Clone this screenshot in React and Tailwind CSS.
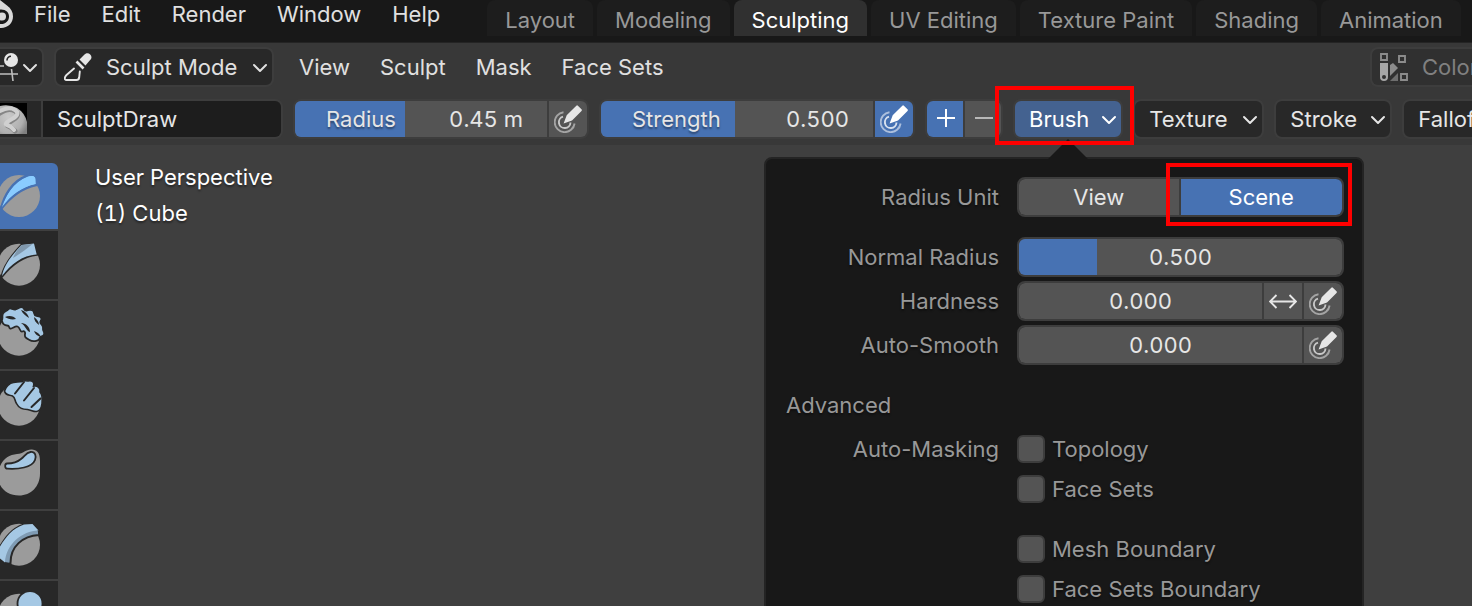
import React, { useState } from 'react';
import { ChevronDown } from 'lucide-react';
import clsx from 'clsx';

const MENUS = ['File', 'Edit', 'Render', 'Window', 'Help'];
const WORKSPACES = ['Layout', 'Modeling', 'Sculpting', 'UV Editing', 'Texture Paint', 'Shading', 'Animation'];
const MODE_MENUS = ['View', 'Sculpt', 'Mask', 'Face Sets'];

const BlenderLogo = () => (
  <svg className="w-4 h-7 shrink-0" viewBox="0 0 16 28" fill="none" aria-hidden="true">
    <path d="M0 0 L7 5.5 C11 8.5 13 12 13 16.5 C13 23 8 28 1 28 L0 28 L0 24 C5.500 24.500 9 21 9 16.500 C9 12 5.500 9 0 9.500 Z" fill="#d9d9d9" />
    <circle cx="2" cy="16.500" r="4" fill="#d9d9d9" />
  </svg>
);

const Chevron = () => <ChevronDown className="size-6 shrink-0 pointer-events-none translate-y-px" strokeWidth={2} />;

const EditorTypeIcon = () => (
  <svg className="w-[18px] h-7 shrink-0" viewBox="0 0 18 28" fill="none" aria-hidden="true">
    <path d="M0 13h4M0 21h18M11.500 16l1.500 12" stroke="#bdbdbd" strokeWidth="1.600" />
    <circle cx="11" cy="7" r="7" fill="#e6e6e6" />
    <path d="M7 7.500A4 4 0 0 1 11 3.300" stroke="#282828" strokeWidth="1.600" />
  </svg>
);

const SculptIcon = () => (
  <svg className="size-7" viewBox="0 0 28 28" fill="none" aria-hidden="true">
    <path d="M10 15.500 2.500 22c-1.800 1.700-2.800 5 0 5h10c1.600 0 2.500-1 2.700-2.500l.6-6" stroke="#e6e6e6" strokeWidth="1.900" strokeLinejoin="round" strokeLinecap="round" />
    <path d="m12.500 8.500 7 7" stroke="#e6e6e6" strokeWidth="2.600" />
    <path d="m15.500 6.500 5-5c2-2 4.200-1.600 5.700-.1s1.900 3.700-.1 5.700l-4.600 5.400Z" fill="#e6e6e6" />
  </svg>
);

const PressureIcon = () => (
  <svg className="size-7" viewBox="0 0 28 28" fill="none" aria-hidden="true">
    <path d="M9.500 7.200A10 10 0 1 0 20.600 18.500" stroke="currentColor" strokeOpacity="0.55" strokeWidth="1.900" />
    <path d="M9 11.700A5.800 5.800 0 1 0 16.500 17.500" stroke="currentColor" strokeOpacity="0.8" strokeWidth="1.900" />
    <path d="M9.600 18.400 12.700 10.200 22.300.7q.8-.8 1.600 0l3.600 3.600q.8.800 0 1.600L18 15.500Z" fill="currentColor" />
  </svg>
);

const ArrowsIcon = () => (
  <svg className="size-7" viewBox="0 0 28 28" fill="none" stroke="#e6e6e6" strokeWidth="1.900" aria-hidden="true">
    <path d="M1 14.500h26M7.500 8 1 14.500 7.500 21M20.500 8l6.500 6.500-6.500 6.500" />
  </svg>
);

const ColorAttributeIcon = () => (
  <svg className="size-7" viewBox="0 0 28 28" fill="none" aria-hidden="true">
    <path d="M1 1h6v6H1zM19 3h6v6h-6zM21 21h6v6h-6z" stroke="#8c8c8c" strokeWidth="1.900" />
    <path fillRule="evenodd" d="M0 10h8v14a4 4 0 0 1-8 0ZM4 22a2 2 0 1 0 0 4 2 2 0 0 0 0-4Z" fill="#a6a6a6" />
    <path d="M10 12l3-2 5 5-8 8Z" fill="#8c8c8c" />
    <path d="M18 20v8h-8Z" fill="#6e6e6e" />
  </svg>
);

const BrushPreview = () => (
  <svg className="w-7 h-8" viewBox="0 0 28 32" aria-hidden="true">
    <defs>
      <radialGradient id="clay" cx="0.3" cy="0.4" r="0.8">
        <stop offset="0" stopColor="#c9c9c9" />
        <stop offset="0.700" stopColor="#b0b0b0" />
        <stop offset="1" stopColor="#808080" />
      </radialGradient>
    </defs>
    <path d="M0 0h27v31H0z" fill="#000" />
    <path d="M0 3Q9 1 17 5q8 5 10 14v12H0Z" fill="url(#clay)" />
    <path d="M0 10Q9 4 15 8t-2 9-5 6 7 5" fill="none" stroke="#858585" strokeWidth="5" strokeLinecap="round" />
    <path d="M0 8Q9 3 15 7t-3 9-5 6 7 5" fill="none" stroke="#d0d0d0" strokeWidth="4" strokeLinecap="round" />
  </svg>
);

const Ball = () => <circle cx="19" cy="33.700" r="21" fill="#9b9b9b" />;

// Sculpt brushes, each drawn on a 58x68 toolbar cell
const TOOLS = [
  {
    name: 'Draw',
    art: (
      <>
        <circle cx="19" cy="33" r="21" fill="#9b9b9b" />
        <path d="M1 46C4 33 12 18 27 13c5-2 9-2 9 3v6C22 25 11 33 1 46Z" fill="#8accff" stroke="#4772b3" strokeWidth="2.400" />
        <path d="M2 44C6 33 14 19 27 14c4-1.500 8-1.500 8.500 2l.3 5C22 24 12 31 2 44Z" fill="#8accff" />
      </>
    ),
  },
  {
    name: 'Draw Sharp',
    art: (
      <>
        <Ball />
        <path d="M1.500 46C4 34 12 24 21.500 14L34 12.500l3 11C22 25 11 34 1.500 46Z" fill="#a5c8e4" stroke="#282828" strokeWidth="2.400" />
        <path d="M2 45C4 34 12 24 21.500 14L34 12.500l2.700 11C22 24.500 11 33 2 45Z" fill="#a5c8e4" />
        <path d="m21.500 14 11-1C27 18 21 22 13 27 15 22 18 18 21.500 14Z" fill="#8098ad" />
      </>
    ),
  },
  {
    name: 'Clay',
    art: (
      <>
        <Ball />
        <path
          d="M1.500 20c2-2 0-5 1.500-7.500 2-3 4-2 5.500-4.500 2-2 4 1 7 .5 3-.8 4-3 7-2.200 2 .6 1 3.700 4 3.200s5-1.500 7 .7c1 2 0 4 3 4.800 3 .8 5 0 5 3 0 2-2 2-1 4 1.200 2 3 3 2.500 5.500s2 3 1 6c-.8 3-4 1-4.500 4-1 3-7 3.500-10 1.500-4-2-5-3-4.500-6 .5-2-1-3.500-2.500-2.500-3 1-2-4-5-5-3-.8-5 3-7.500 2-1.500-.8 0-3-3-3-2 0-4-1-5-4.500Z"
          fill="#a5c8e4" stroke="#282828" strokeWidth="1.800"
        />
        <path d="M5 16c4-2 9-1 11 2-4 1-8 0-11-2Zm16-7c4 1 7 4 8 8-3-2-6-4-8-8Zm0 13c5 0 9 4 9 9-4-1-4-6-9-9Zm13 8c3 1 6 3 7 6-4-1-6-3-7-6Zm0-14c3 2 5 5 5 8-3-2-5-5-5-8Z" fill="#282828" />
      </>
    ),
  },
  {
    name: 'Clay Strips',
    art: (
      <>
        <Ball />
        <path
          d="M4.500 20c1-4 5-8 9-8.500 4-.8 6-1 8-.8 2-1.500 4-1.200 6.500-.7 4-1.200 7 1.500 5.500 5.200 4-.7 7.500 1.800 6.500 5.800 3 3 2.500 7 2 11.500-.5 5-3 8-5.500 8-3 .5-5-1.500-9-2-5 0-9-2-11-6-2-3-1-6-4-7.500s-7 0-8-5Z"
          fill="#a5c8e4" stroke="#282828" strokeWidth="1.600"
        />
        <path d="M15 22.500 24 11M24 29.500 34 17M31.500 36l9-8.500" stroke="#282828" strokeWidth="2" strokeLinecap="round" />
      </>
    ),
  },
  {
    name: 'Clay Thumb',
    art: (
      <>
        <path d="M-2 33C0 19 8 14 17 13c7-.5 9-5 15-4.500 7 .5 8 6 8 12v12c0 13-9 22-21 22S-3 46-2 33Z" fill="#9b9b9b" />
        <path
          d="M7 22.500c5 0 10-1 14-4.500 4-3 5-6.500 9.500-7 5-.5 6 4 4.500 8-1.500 4-5 6-11 7.500s-12 1.500-16.500 1.200c-3 0-3-5-.5-5.200Z"
          fill="#a5c8e4" stroke="#282828" strokeWidth="1.800"
        />
      </>
    ),
  },
  {
    name: 'Layer',
    art: (
      <>
        <Ball />
        <path d="M-2 39C5 27 11 18 24 13.500l8.500-.5 6.500 7v4C23 25 10 35 10.500 53L5 52-2 46Z" fill="#7f9bb3" stroke="#282828" strokeWidth="2" />
        <path d="M-2 39C5 27 11 18 24 13.500l8.500-.5 6 6.500C22 20 6 33 5 51.500L-2 46Z" fill="#a5c8e4" />
      </>
    ),
  },
  {
    name: 'Inflate',
    art: (
      <>
        <Ball />
        <circle cx="30" cy="22.500" r="12.500" fill="#a5c8e4" stroke="#282828" strokeWidth="1.800" />
      </>
    ),
  },
];

const IconButton = ({ label, active, children }) => (
  <button
    aria-label={label}
    className={clsx(
      'w-10 shrink-0 border-l-2 border-[#3d3d3d] grid place-items-center',
      active ? 'bg-[#4772b3] text-white' : 'bg-[#545454] text-[#e6e6e6]'
    )}
  >
    {children}
  </button>
);

// Outer frame shared by every grouped control
const Group = ({ className, children }) => (
  <div className={clsx('h-10 flex rounded-lg border-2 border-[#3d3d3d] overflow-hidden', className)}>{children}</div>
);

const HeaderSlider = ({ id, label, value, fill, active, className }) => (
  <Group className={clsx('shrink-0', className)}>
    <div className="relative flex-1 min-w-0 flex items-center bg-[#545454] pl-[31px] pr-6">
      <div className="absolute inset-y-0 left-0 bg-[#4772b3]" style={{ width: `${fill}%` }} />
      <label htmlFor={id} className="relative">{label}</label>
      <input id={id} defaultValue={value} className="relative flex-1 min-w-0 text-right tabular-nums outline-none" />
    </div>
    <IconButton label={`${label} pressure`} active={active}>
      <PressureIcon />
    </IconButton>
  </Group>
);

const NumberField = ({ id, label, value, fill = 0, children }) => (
  <>
    <label htmlFor={id} className="text-right">{label}</label>
    <Group className="text-[#e6e6e6]">
      <div className="relative flex-1 min-w-0 flex bg-[#545454]">
        <div className="absolute inset-y-0 left-0 bg-[#4772b3]" style={{ width: `${fill}%` }} />
        <input id={id} defaultValue={value} className="relative w-full text-center tabular-nums outline-none" />
      </div>
      {children}
    </Group>
  </>
);

const Check = ({ label }) => (
  <label className="col-start-2 h-10 flex items-center gap-[7px]">
    <input type="checkbox" className="appearance-none size-7 rounded-md border-2 border-[#3d3d3d] bg-[#545454] checked:bg-[#4772b3]" />
    {label}
  </label>
);

const DropButton = ({ label, open, onClick, className }) => (
  <button
    onClick={onClick}
    className={clsx(
      'h-10 shrink-0 flex items-center justify-between gap-2 pl-3.5 rounded-lg border-2 border-[#3d3d3d] whitespace-nowrap',
      open ? 'bg-[#446290] text-white' : 'bg-[#282828]',
      className
    )}
  >
    {label}
    <Chevron />
  </button>
);

const BrushPopover = () => {
  const [unit, setUnit] = useState('Scene');

  return (
    <div className="absolute z-10 top-[58px] -left-[249px] w-[600px] rounded-lg border-2 border-[#242424] bg-[#181818] pt-[18px] pb-5 pl-5 pr-[18px] text-[#989898]">
      <svg className="absolute -top-5 left-[282px] w-10 h-5" viewBox="0 0 40 20" aria-hidden="true">
        <path d="M0 20 20 0l20 20Z" fill="#181818" />
      </svg>
      <div className="grid grid-cols-[213px_1fr] gap-x-[18px] gap-y-1 items-center">
        <span className="text-right mb-4">Radius Unit</span>
        <div className="relative mb-4">
          <div className="h-10 grid grid-cols-2 rounded-lg border-2 border-[#3d3d3d] overflow-hidden">
            {['View', 'Scene'].map((u) => (
              <button
                key={u}
                aria-pressed={unit === u}
                onClick={() => setUnit(u)}
                className={clsx(
                  'first:border-r-2 border-[#3d3d3d]',
                  unit === u ? 'bg-[#4772b3] text-white' : 'bg-[#545454] text-[#e6e6e6]'
                )}
              >
                {u}
              </button>
            ))}
          </div>
          <div className="absolute -top-3.5 -right-2 w-[186px] h-[63px] border-4 border-[#ff0000] pointer-events-none" />
        </div>

        <NumberField id="normal-radius" label="Normal Radius" value="0.500" fill={24} />
        <NumberField id="hardness" label="Hardness" value="0.000">
          <IconButton label="Invert hardness"><ArrowsIcon /></IconButton>
          <IconButton label="Hardness pressure"><PressureIcon /></IconButton>
        </NumberField>
        <NumberField id="auto-smooth" label="Auto-Smooth" value="0.000">
          <IconButton label="Auto-smooth pressure"><PressureIcon /></IconButton>
        </NumberField>
      </div>

      <h2 className="mt-5 h-10 flex items-center">Advanced</h2>
      <div className="mt-1 grid grid-cols-[213px_1fr] gap-x-[18px] items-center">
        <span className="text-right">Auto-Masking</span>
        <Check label="Topology" />
        <Check label="Face Sets" />
        <div className="h-5 col-span-2" />
        <Check label="Mesh Boundary" />
        <Check label="Face Sets Boundary" />
      </div>
    </div>
  );
};

const TopBar = ({ workspace, onSelect }) => (
  <header className="h-[43px] shrink-0 flex items-start bg-[#181818] border-b border-[#242424] overflow-hidden">
    <BlenderLogo />
    <nav className="h-7 shrink-0 flex items-center gap-[31px] pl-[18px] pr-[47px] text-[#e0e0e0]">
      {MENUS.map((m) => <button key={m}>{m}</button>)}
    </nav>
    <div className="h-9 flex gap-1">
      {WORKSPACES.map((w) => (
        <button
          key={w}
          onClick={() => onSelect(w)}
          className={clsx(
            'shrink-0 px-[18px] pt-1 rounded-t-lg whitespace-nowrap',
            w === workspace ? 'bg-[#303030] text-white' : 'bg-[#1d1d1d] text-[#989898]'
          )}
        >
          {w}
        </button>
      ))}
    </div>
  </header>
);

const ModeRow = () => (
  <div className="flex items-center gap-2.5 text-[#e0e0e0]">
    <button aria-label="Editor type" className="h-10 w-11 shrink-0 flex items-center justify-between rounded-r-lg border-2 border-l-0 border-[#3d3d3d] bg-[#282828]">
      <EditorTypeIcon />
      <Chevron />
    </button>
    <div className="relative w-[220px] h-10 shrink-0 flex items-center rounded-lg border-2 border-[#3d3d3d] bg-[#282828]">
      <div className="absolute left-2"><SculptIcon /></div>
      <select aria-label="Mode" className="appearance-none w-full h-full pl-[50px] outline-none">
        <option>Sculpt Mode</option>
      </select>
      <div className="absolute right-0 pointer-events-none"><Chevron /></div>
    </div>
    <nav className="flex gap-[30px] px-[15px] whitespace-nowrap">
      {MODE_MENUS.map((m) => <button key={m}>{m}</button>)}
    </nav>
    <button className="ml-auto w-[102px] h-10 shrink-0 flex items-center gap-3.5 pl-2 rounded-l-lg border-2 border-r-0 border-[#3d3d3d] bg-[#303030] text-[#808080] overflow-hidden whitespace-nowrap">
      <span className="shrink-0"><ColorAttributeIcon /></span>
      Color
    </button>
  </div>
);

const ToolRow = () => {
  const [open, setOpen] = useState(true);

  return (
    <div className="flex items-center gap-2.5 text-[#e6e6e6]">
      <div className="h-10 w-[283px] shrink-0 flex rounded-r-lg border-2 border-l-0 border-[#3d3d3d] overflow-hidden">
        <button aria-label="Browse brush" className="w-[43px] shrink-0 flex items-center bg-[#282828] border-r-2 border-[#3d3d3d]">
          <BrushPreview />
        </button>
        <input aria-label="Brush name" defaultValue="SculptDraw" className="flex-1 min-w-0 bg-[#1d1d1d] pl-3.5 outline-none" />
      </div>
      <HeaderSlider id="radius" label="Radius" value="0.45 m" fill={43.7} className="w-[296px]" />
      <HeaderSlider id="strength" label="Strength" value="0.500" fill={49.3} active className="w-[316px]" />
      <Group className="w-[78px] shrink-0">
        <button aria-label="Add" className="flex-1 grid place-items-center bg-[#4772b3]">
          <svg className="size-5" viewBox="0 0 20 20" stroke="#fff" strokeWidth="2" aria-hidden="true"><path d="M2 9h18M11 0v18" /></svg>
        </button>
        <button aria-label="Subtract" className="flex-1 grid place-items-center bg-[#545454] border-l-2 border-[#3d3d3d]">
          <svg className="size-5" viewBox="0 0 20 20" stroke="#b8b8b8" strokeWidth="2" aria-hidden="true"><path d="M2 9h18" /></svg>
        </button>
      </Group>
      <div className="relative shrink-0">
        <DropButton label="Brush" open={open} onClick={() => setOpen(!open)} />
        {open && <BrushPopover />}
        <div className="absolute z-20 -top-[13px] -left-[18px] -right-[11px] h-[59px] border-4 border-[#ff0000] pointer-events-none" />
      </div>
      <DropButton label="Texture" className="w-[131px]" />
      <DropButton label="Stroke" className="w-[118px]" />
      <DropButton label="Falloff" />
    </div>
  );
};

const Toolbar = () => {
  const [tool, setTool] = useState('Draw');

  return (
    <div className="w-[58px] flex flex-col gap-0.5">
      {TOOLS.map((t) => (
        <button
          key={t.name}
          aria-label={t.name}
          onClick={() => setTool(t.name)}
          className={clsx(
            'h-[68px] first:h-[66px] shrink-0 first:rounded-tr-md overflow-hidden',
            tool === t.name ? 'bg-[#4772b3]' : 'bg-[#282828]'
          )}
        >
          <svg className="w-[58px] h-[68px]" viewBox="0 0 58 68" aria-hidden="true">{t.art}</svg>
        </button>
      ))}
    </div>
  );
};

const App = () => {
  const [workspace, setWorkspace] = useState('Sculpting');

  return (
    <div className="h-screen flex flex-col overflow-hidden bg-[#3f3f3f] font-['Inter',sans-serif] text-[22px] leading-7 [text-shadow:0_2px_2px_rgba(0,0,0,0.4)]">
      <TopBar workspace={workspace} onSelect={setWorkspace} />
      <div className="shrink-0 flex flex-col gap-3 pt-1 pb-1.5 bg-[#383838]">
        <ModeRow />
        <ToolRow />
      </div>
      <main className="flex-1 min-h-0 flex items-start pt-[18px] overflow-hidden">
        <Toolbar />
        <div className="pl-[37px] -mt-1 leading-9 tabular-nums text-white">
          <p>User Perspective</p>
          <p>(1) Cube</p>
        </div>
      </main>
    </div>
  );
};

export default App;
